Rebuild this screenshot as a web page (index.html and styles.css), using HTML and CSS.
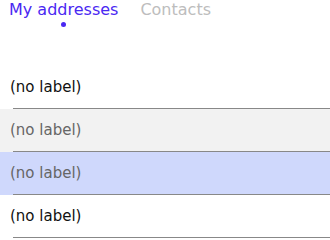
FILE: index.html
```html
<!DOCTYPE html>
<html lang="en">
<head>
    <meta charset="UTF-8">
    <meta name="viewport" content="width=device-width, initial-scale=1.0">
    <title>Addresses</title>
    <link rel="stylesheet" href="styles.css">
</head>
<body>

<div class="tabs">
    <div class="tab active">
        <span class="tab-label">My addresses</span>
        <span class="tab-dot"></span>
    </div>
    <div class="tab">
        <span class="tab-label">Contacts</span>
    </div>
</div>

<div class="list">
    <div class="row"><div class="row-label">(no label)</div></div>
    <div class="row hover"><div class="row-label">(no label)</div></div>
    <div class="row selected"><div class="row-label">(no label)</div></div>
    <div class="row"><div class="row-label">(no label)</div></div>
</div>

</body>
</html>
```

FILE: styles.css
```css
body {
    margin: 0;
    font-family: 'DejaVu Sans', sans-serif;
    background-color: #fff;
    color: #111;
}
/* Tabs at the top */
.tabs {
    display: flex;
    gap: 22px;
    padding: 0 9px;
    height: 66px;
}
.tab {
    display: flex;
    flex-direction: column;
    align-items: center;
}
.tab-label {
    font-size: 16px;
    line-height: 19px;
    color: #bdbdbd;
}
.tab.active .tab-label {
    color: #4a28f2;
}
.tab-dot {
    width: 5px;
    height: 5px;
    margin-top: 3px;
    border-radius: 50%;
    background-color: #4a28f2;
}
/* Address rows */
.row-label {
    height: 42px;
    line-height: 42px;
    padding-left: 10px;
    font-size: 15px;
}
.row::after {
    content: '';
    display: block;
    height: 1px;
    margin-left: 13px;
    background-color: #888;
}
.row.hover {
    background-color: #f2f2f2;
    color: #666;
}
.row.selected {
    background-color: #cfd8fc;
    color: #666;
}
```
